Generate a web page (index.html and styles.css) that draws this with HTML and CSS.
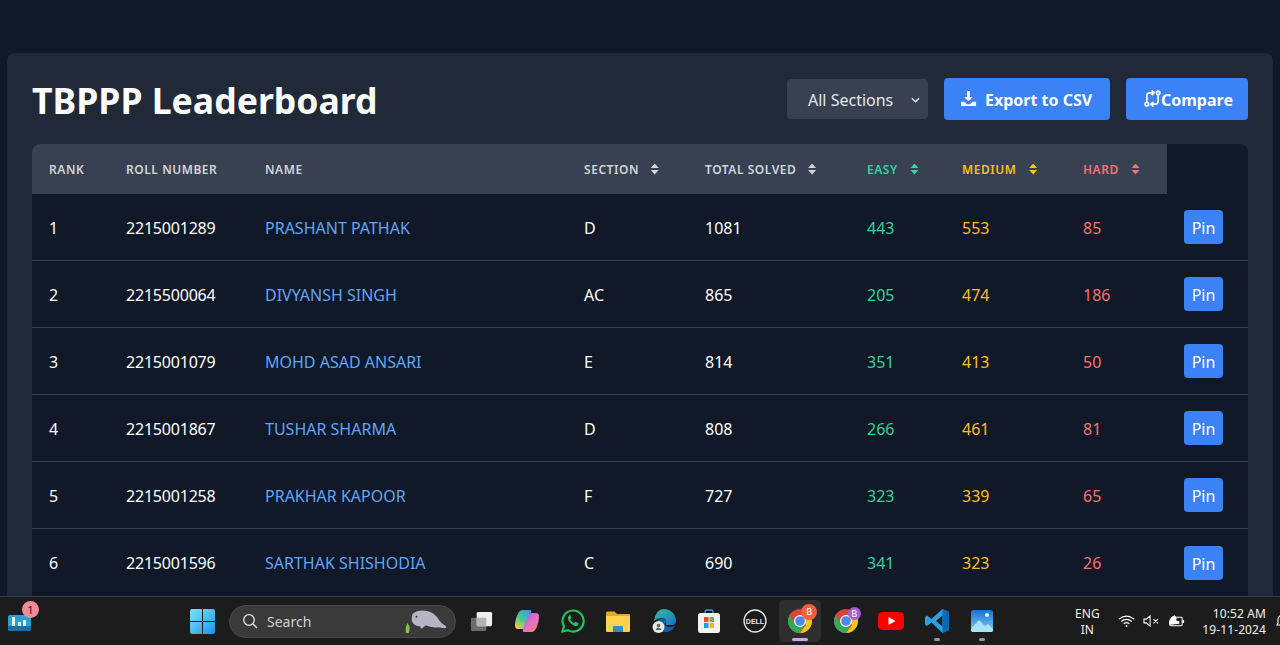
FILE: index.html
```html
<!DOCTYPE html>
<html>
<head>
    <title>TBPPP Leaderboard</title>
    <link rel="stylesheet" href="styles.css">
</head>
<body>
    <main class="page">
        <div class="container">
            <div class="top-row">
                <h1>TBPPP Leaderboard</h1>
                <div class="actions">
                    <div class="select-box">
                        <span>All Sections</span>
                        <svg class="chevron" viewBox="0 0 10 6"><path d="M1 1l4 4 4-4" fill="none" stroke="#e5e7eb" stroke-width="1.4"/></svg>
                    </div>
                    <button class="btn export-btn">
                        <svg class="btn-icon" viewBox="0 0 18 18"><path fill="#fff" d="M7.4 1h3.2v6.4h3L9 12 4.400 7.400h3zM1 12.500h3.600L7.400 15h3.200l2.800-2.500H17V17H1z"/></svg>
                        Export to CSV
                    </button>
                    <button class="btn compare-btn">
                        <svg class="btn-icon" viewBox="0 0 18 18" fill="none" stroke="#fff" stroke-width="1.8"><circle cx="3" cy="15" r="1.800"/><circle cx="15" cy="3" r="1.800"/><path d="M3 13V6Q3 3 6 3H10.500M8 .5L10.800 3 8 5.500"/><path d="M15 5v7Q15 15 12 15H7.500M10 12.500L7.200 15l2.800 2.500"/></svg>
                        Compare
                    </button>
                </div>
            </div>

            <div class="table-wrap">
                <table>
                    <thead>
                        <tr>
                            <th class="col-rank">Rank</th>
                            <th class="col-roll">Roll Number</th>
                            <th class="col-name">Name</th>
                            <th class="col-section">Section <i class="sort"></i></th>
                            <th class="col-total">Total Solved <i class="sort"></i></th>
                            <th class="col-easy easy">Easy <i class="sort"></i></th>
                            <th class="col-medium medium">Medium <i class="sort"></i></th>
                            <th class="col-hard hard">Hard <i class="sort"></i></th>
                        </tr>
                    </thead>
                    <tbody>
                        <tr><td>1</td><td class="roll">2215001289</td><td class="name">PRASHANT PATHAK</td><td>D</td><td>1081</td><td class="easy">443</td><td class="medium">553</td><td class="hard">85</td><td><button class="pin">Pin</button></td></tr>
                        <tr><td>2</td><td class="roll">2215500064</td><td class="name">DIVYANSH SINGH</td><td>AC</td><td>865</td><td class="easy">205</td><td class="medium">474</td><td class="hard">186</td><td><button class="pin">Pin</button></td></tr>
                        <tr><td>3</td><td class="roll">2215001079</td><td class="name">MOHD ASAD ANSARI</td><td>E</td><td>814</td><td class="easy">351</td><td class="medium">413</td><td class="hard">50</td><td><button class="pin">Pin</button></td></tr>
                        <tr><td>4</td><td class="roll">2215001867</td><td class="name">TUSHAR SHARMA</td><td>D</td><td>808</td><td class="easy">266</td><td class="medium">461</td><td class="hard">81</td><td><button class="pin">Pin</button></td></tr>
                        <tr><td>5</td><td class="roll">2215001258</td><td class="name">PRAKHAR KAPOOR</td><td>F</td><td>727</td><td class="easy">323</td><td class="medium">339</td><td class="hard">65</td><td><button class="pin">Pin</button></td></tr>
                        <tr><td>6</td><td class="roll">2215001596</td><td class="name">SARTHAK SHISHODIA</td><td>C</td><td>690</td><td class="easy">341</td><td class="medium">323</td><td class="hard">26</td><td><button class="pin">Pin</button></td></tr>
                    </tbody>
                </table>
            </div>
        </div>
    </main>

    <footer class="taskbar">
        <div class="widget">
            <svg viewBox="0 0 24 20" width="24" height="20"><rect x="0" y="4" width="23" height="16" rx="2" fill="#2b9fd8"/><path fill="#eaf6fc" d="M4 6h3v9H4zM10 11h3v4h-3zM15 9h3v6h-3z"/><path fill="#1a6fa8" d="M0 15h23v3a2 2 0 0 1-2 2H2a2 2 0 0 1-2-2z"/></svg>
            <span class="badge">1</span>
        </div>

        <div class="task-center">
            <svg class="win-logo" viewBox="0 0 24 24" width="25" height="25"><defs><linearGradient id="win" x1="0" y1="0" x2="1" y2="1"><stop offset="0" stop-color="#7fe3f7"/><stop offset="1" stop-color="#1a94e8"/></linearGradient></defs><path fill="url(#win)" d="M0 2a2 2 0 0 1 2-2h9.500v11.500H0zM12.500 0H22a2 2 0 0 1 2 2v9.500H12.500zM0 12.500h11.500V24H2a2 2 0 0 1-2-2zM12.500 12.500H24V22a2 2 0 0 1-2 2h-9.500z"/></svg>

            <div class="searchbox">
                <svg viewBox="0 0 16 16" width="16" height="16" fill="none" stroke="#e5e5e5" stroke-width="1.300"><circle cx="7" cy="7" r="5.300"/><path d="M11 11l4 4"/></svg>
                <span>Search</span>
                <svg class="manatee" viewBox="0 0 46 26" width="44" height="25"><path fill="#8fc23a" d="M2 25q-1-6 2-11 0 3 1.500 3 1 4-.5 8z"/><path fill="#b9b3c4" d="M9 5q6-5 15-3 9 2 13 10 1 2 7 6 1 2-2 2l-6-1q-8 1-13-2l-4 3q-2 1-2-2-7 0-9-6 0-5 1-7z"/><circle cx="13" cy="8" r="1" fill="#333"/></svg>
            </div>

            <div class="tray-icons">
                <span class="app">
                    <svg viewBox="0 0 26 26" width="25" height="25"><rect x="2" y="9" width="16" height="14" rx="1.500" fill="#6b6b6b"/><rect x="8" y="3" width="16" height="15" rx="1.500" fill="#eeeeee"/><rect x="8" y="9" width="10" height="9" fill="#b3b3b3"/></svg>
                </span>
                <span class="app">
                    <svg viewBox="0 0 26 26" width="26" height="26"><defs><linearGradient id="cop" x1="0" y1="0" x2="1" y2="1"><stop offset="0" stop-color="#7a6cf0"/><stop offset=".55" stop-color="#e86fc0"/><stop offset="1" stop-color="#f58a6a"/></linearGradient><linearGradient id="cop2" x1="0.800" y1="0" x2="0.200" y2="1"><stop offset="0" stop-color="#2f9cf0"/><stop offset=".55" stop-color="#4fc98a"/><stop offset="1" stop-color="#f2c94c"/></linearGradient></defs><path fill="url(#cop2)" d="M8 2h8Q18 2 17 5L12 19Q11 21 8 21H4Q.5 21 1 16 2 8 5 4 6.500 2 8 2z"/><path fill="url(#cop)" d="M18 24H10Q8 24 9 21L14 7Q15 5 18 5h4Q25.500 5 25 10 24 18 21 22 19.500 24 18 24z"/></svg>
                </span>
                <span class="app">
                    <svg viewBox="0 0 26 26" width="26" height="26"><path fill="none" stroke="#25c25a" stroke-width="2.200" d="M13 2.500a10.500 10.500 0 0 0-9 15.800L2.500 23.500l5.400-1.400A10.500 10.500 0 1 0 13 2.500z"/><path fill="#25c25a" d="M9.500 7.500c-1.200.6-2 2-1.500 3.700 1 3 3.500 5.500 6.800 6.700 1.600.5 3-.4 3.600-1.500.3-.7.200-1.200-.3-1.500l-2-1c-.5-.2-.9-.1-1.200.3l-.7.9c-2-.8-3.300-2.200-4-3.900l.8-.8c.3-.3.400-.7.200-1.100l-.9-2.100c-.2-.4-.5-.8-.8-.7z"/></svg>
                </span>
                <span class="app">
                    <svg viewBox="0 0 26 24" width="26" height="24"><path fill="#e5a91c" d="M1 4a1.500 1.500 0 0 1 1.500-1.500h7L12 5h12a1 1 0 0 1 1 1v2H1z"/><path fill="#fbd34d" d="M1 7h24v15a1 1 0 0 1-1 1H2a1 1 0 0 1-1-1z"/><path fill="#2a8fd0" d="M9 17h8a1 1 0 0 1 1 1v5H8v-5a1 1 0 0 1 1-1z"/></svg>
                </span>
                <span class="app">
                    <svg viewBox="0 0 26 26" width="26" height="26"><defs><linearGradient id="edge" x1="0" y1="0" x2="1" y2="1"><stop offset="0" stop-color="#35c1a3"/><stop offset="1" stop-color="#1a6fc4"/></linearGradient></defs><path fill="url(#edge)" d="M13 1a12 12 0 0 1 12 12q0 4-4 4h-5q-2-.5-1-2 1-4-3-5-5-.5-9 3 2-12 10-12z"/><path fill="#0e5fa8" d="M7 12q5-3 8 0 1 2-1 4 1 5 10 2-3 6-10 6-3 0-5-2z"/><circle cx="7.500" cy="19" r="6" fill="#e8e8e8"/><circle cx="7.500" cy="17.500" r="1.800" fill="#666"/><path fill="#666" d="M4.500 22q.5-2.500 3-2.500t3 2.500z"/></svg>
                </span>
                <span class="app">
                    <svg viewBox="0 0 26 26" width="26" height="26"><path fill="none" stroke="#3aa0dc" stroke-width="1.300" d="M9 6V4a2 2 0 0 1 2-2h4a2 2 0 0 1 2 2v2"/><rect x="2" y="5" width="22" height="20" rx="2.500" fill="#f2f2f2"/><rect x="8" y="9" width="4.500" height="5" fill="#f25022"/><rect x="13.500" y="9" width="4.500" height="5" fill="#7fba00"/><rect x="8" y="15" width="4.500" height="5" fill="#00a4ef"/><rect x="13.500" y="15" width="4.500" height="5" fill="#ffb900"/></svg>
                </span>
                <span class="app">
                    <svg viewBox="0 0 26 26" width="26" height="26"><circle cx="13" cy="13" r="11" fill="none" stroke="#e8e8e8" stroke-width="1.300"/><text x="13" y="15.500" class="dell-text">DELL</text></svg>
                </span>
                <span class="app app-active">
                    <svg viewBox="0 0 26 26" width="26" height="26"><defs><g id="chrome-mark"><circle cx="13" cy="13" r="12" fill="#dc4437"/><path fill="#f5c518" d="M13 25a12 12 0 0 0 10.400-18H13l6 10z"/><path fill="#34a853" d="M2.600 7A12 12 0 0 0 13 25l5.200-9H8z"/><circle cx="13" cy="13" r="6" fill="#fff"/><circle cx="13" cy="13" r="4.800" fill="#4a8af0"/></g></defs><use href="#chrome-mark"/></svg>
                    <span class="profile profile-orange">B</span>
                    <span class="run-line run-active"></span>
                </span>
                <span class="app">
                    <svg viewBox="0 0 26 26" width="26" height="26"><use href="#chrome-mark"/></svg>
                    <span class="profile profile-purple">B</span>
                </span>
                <span class="app">
                    <svg viewBox="0 0 26 18" width="26" height="18"><rect width="26" height="18" rx="4.500" fill="#f00"/><path fill="#fff" d="M10.500 5l7 4-7 4z"/></svg>
                </span>
                <span class="app">
                    <svg viewBox="0 0 26 26" width="26" height="26"><path fill="#2a9fe8" d="M18.500 1L25 4v18l-6.500 3-11-10.500-4.500 3.500-2-1.500V9l2-1.500 4.500 3.500zM18.500 7.500L12 13l6.500 5.500z"/><path fill="#0a6ab5" d="M18.500 1L25 4v18l-6.500 3z"/></svg>
                    <span class="run-line"></span>
                </span>
                <span class="app">
                    <svg viewBox="0 0 24 24" width="24" height="24"><defs><linearGradient id="photo" x1="0" y1="0" x2="0" y2="1"><stop offset="0" stop-color="#1f6fd0"/><stop offset="1" stop-color="#7cd0f5"/></linearGradient></defs><rect x="1" y="1" width="22" height="22" rx="2.500" fill="url(#photo)"/><path fill="#a6e3f8" d="M1 20l8-9 6 6 3-2 5 5v1a2 2 0 0 1-2 2H3a2 2 0 0 1-2-2z"/><circle cx="17" cy="6" r="2" fill="#e6f6fd"/></svg>
                    <span class="run-line"></span>
                </span>
            </div>
        </div>

        <div class="sys-tray">
            <div class="lang">ENG<br>IN</div>
            <div class="sys-icons">
                <svg viewBox="0 0 18 14" width="17" height="14" fill="none" stroke="#fff" stroke-width="1.200"><path d="M1 5q8-6.500 16 0M3.500 7.500q5.500-4.500 11 0M6 10q3-2.500 6 0"/><circle cx="9" cy="12.300" r="1" fill="#fff" stroke="none"/></svg>
                <svg viewBox="0 0 18 14" width="17" height="14" fill="none" stroke="#fff" stroke-width="1.100"><path d="M1 5h2.500L7.500 1.500v11L3.500 9H1zM11 5l5 4.500M16 5l-5 4.500"/></svg>
                <svg viewBox="0 0 18 14" width="17" height="14"><path fill="none" stroke="#fff" stroke-width="1.100" d="M4 3h10a1 1 0 0 1 1 1v7a1 1 0 0 1-1 1H3a1 1 0 0 1-1-1V7"/><path fill="#fff" d="M15.500 6H17v3h-1.500zM1 9q0-5 6-8l1 1q2 2 1 5l3 0v3l-9 1q-2 0-2-2z"/></svg>
            </div>
            <div class="clock">10:52 AM<br>19-11-2024</div>
            <svg class="bell" viewBox="0 0 10 16" width="10" height="16" fill="none" stroke="#fff" stroke-width="1.100"><path d="M8 12H1l1-2V6a5 5 0 0 1 6-4"/></svg>
        </div>
    </footer>
</body>
</html>
```

FILE: styles.css
```css
* {
    box-sizing: border-box;
}

html, body {
    height: 100%;
}

body {
    margin: 0;
    display: flex;
    flex-direction: column;
    overflow: hidden;
    font-family: "Noto Sans", "Open Sans", Arial, sans-serif;
    background-color: #111827;
    color: #fff;
}

.page {
    flex: 1;
    min-height: 0;
    overflow: hidden;
    padding: 53px 7px 0 7px;
    border-bottom: 1px solid #3a3d42;
}

.container {
    padding: 25px;
    background-color: #1f2937;
    border-radius: 8px;
}

.top-row {
    display: flex;
    justify-content: space-between;
    align-items: center;
    height: 42px;
    margin-bottom: 24px;
}

h1 {
    margin: 0;
    padding-top: 1px;
    font-size: 35.6px;
    font-weight: 700;
    line-height: 46px;
}

.actions {
    display: flex;
    align-items: center;
    gap: 16px;
}

.select-box {
    width: 141px;
    height: 40px;
    padding: 2px 8px 0 21px;
    display: flex;
    align-items: center;
    justify-content: space-between;
    background-color: #374151;
    border-radius: 4px;
    font-size: 16px;
    color: #e5e7eb;
}

.chevron {
    width: 9px;
    height: 6px;
}

.btn {
    height: 42px;
    display: flex;
    align-items: center;
    border: none;
    border-radius: 4px;
    background-color: #3b82f6;
    color: #fff;
    font-family: inherit;
    font-size: 16px;
    font-weight: 700;
    padding-top: 2px;
}

.export-btn {
    width: 166px;
    padding-left: 16px;
    gap: 8px;
}

.compare-btn {
    width: 122px;
    padding-left: 18px;
}

.btn-icon {
    width: 17px;
    height: 17px;
    margin-top: -2px;
    flex-shrink: 0;
}

.table-wrap {
    min-height: 500px;
    background-color: #111827;
    border-radius: 8px;
    overflow: hidden;
}

table {
    width: 100%;
    border-collapse: separate;
    border-spacing: 0;
    table-layout: fixed;
}

th {
    height: 50px;
    padding: 0 0 0 17px;
    background-color: #374151;
    color: #d1d5db;
    font-size: 12px;
    font-weight: 600;
    letter-spacing: 0.55px;
    text-align: left;
    text-transform: uppercase;
}

.col-rank { width: 77px; }
.col-roll { width: 139px; }
.col-name { width: 319px; }
.col-section { width: 121px; }
.col-total { width: 162px; }
.col-easy { width: 95px; }
.col-medium { width: 121px; }
.col-hard { width: 101px; }

.sort {
    display: inline-block;
    width: 8px;
    height: 11px;
    margin-left: 8px;
    vertical-align: -1px;
    background-color: currentColor;
    clip-path: polygon(50% 0, 100% 42%, 0 42%, 50% 0, 50% 100%, 100% 58%, 0 58%, 50% 100%);
}

th.easy .sort,
th.medium .sort,
th.hard .sort {
    margin-left: 9px;
}

td {
    height: 67px;
    padding: 1px 0 0 17px;
    border-bottom: 1px solid #374151;
    font-size: 16px;
    color: #fff;
}

td:last-child {
    padding-top: 0;
}

tr:last-child td {
    border-bottom: none;
}

td.roll {
    letter-spacing: -0.2px;
}

td.name {
    color: #60a5fa;
}

.easy, td.easy { color: #34d399; }
.medium, td.medium { color: #fbbf24; }
.hard, td.hard { color: #f87171; }

.pin {
    display: block;
    width: 39px;
    height: 34px;
    padding: 2px 0 0;
    border: none;
    border-radius: 4px;
    background-color: #3b82f6;
    color: #fff;
    font-family: inherit;
    font-size: 16px;
}

.taskbar {
    flex: 0 0 48px;
    position: relative;
    display: flex;
    align-items: center;
    background-color: #1c1c1c;
    overflow: hidden;
}

.widget {
    position: relative;
    width: 24px;
    margin-left: 8px;
    display: flex;
}

.badge {
    position: absolute;
    top: -10px;
    right: -7px;
    width: 17px;
    height: 17px;
    border-radius: 50%;
    background-color: #f28b96;
    color: #222;
    font-size: 11px;
    line-height: 17px;
    text-align: center;
}

.task-center {
    margin-left: 158px;
    display: flex;
    align-items: center;
}

.win-logo {
    margin-right: 14px;
}

.searchbox {
    width: 227px;
    height: 33px;
    padding: 0 7px 0 12px;
    display: flex;
    align-items: center;
    gap: 9px;
    background-color: #3a3a3a;
    border: 1px solid #4a4a4a;
    border-radius: 17px;
    font-size: 14px;
    color: #d0d0d0;
}

.manatee {
    margin-left: auto;
}

.tray-icons {
    margin-left: 3px;
    display: flex;
    align-items: center;
}

.app {
    position: relative;
    width: 42px;
    height: 42px;
    margin: 0 1.75px;
    display: flex;
    align-items: center;
    justify-content: center;
    border-radius: 5px;
}

.app-active {
    background-color: #2e2e2e;
}

.profile {
    position: absolute;
    top: 4px;
    right: 4px;
    width: 16px;
    height: 16px;
    border-radius: 50%;
    color: #fff;
    font-size: 9px;
    line-height: 16px;
    text-align: center;
}

.profile-orange { background-color: #f0623a; }
.profile-purple { width: 13px; height: 13px; line-height: 13px; background-color: #a45fd0; top: 7px; right: 6px; }

.run-line {
    position: absolute;
    bottom: 1px;
    left: 50%;
    width: 6px;
    height: 3px;
    margin-left: -3px;
    border-radius: 2px;
    background-color: #9a9a9a;
}

.run-active {
    width: 16px;
    margin-left: -8px;
    background-color: #d5a6e6;
}

.dell-text {
    font-family: "Liberation Sans", Arial, sans-serif;
    font-size: 7px;
    font-weight: 700;
    fill: #e8e8e8;
    text-anchor: middle;
}

.sys-tray {
    margin-left: auto;
    display: flex;
    align-items: center;
    font-size: 12px;
    line-height: 16px;
    color: #f0f0f0;
}

.lang {
    width: 26px;
    padding-top: 2px;
    text-align: center;
    font-size: 12px;
}

.sys-icons {
    margin-left: 18px;
    display: flex;
    align-items: center;
    gap: 8px;
}

.clock {
    margin-left: 17px;
    padding-top: 2px;
    letter-spacing: 0.1px;
    text-align: right;
}

.bell {
    margin-left: 10px;
    margin-right: -6px;
}
```
